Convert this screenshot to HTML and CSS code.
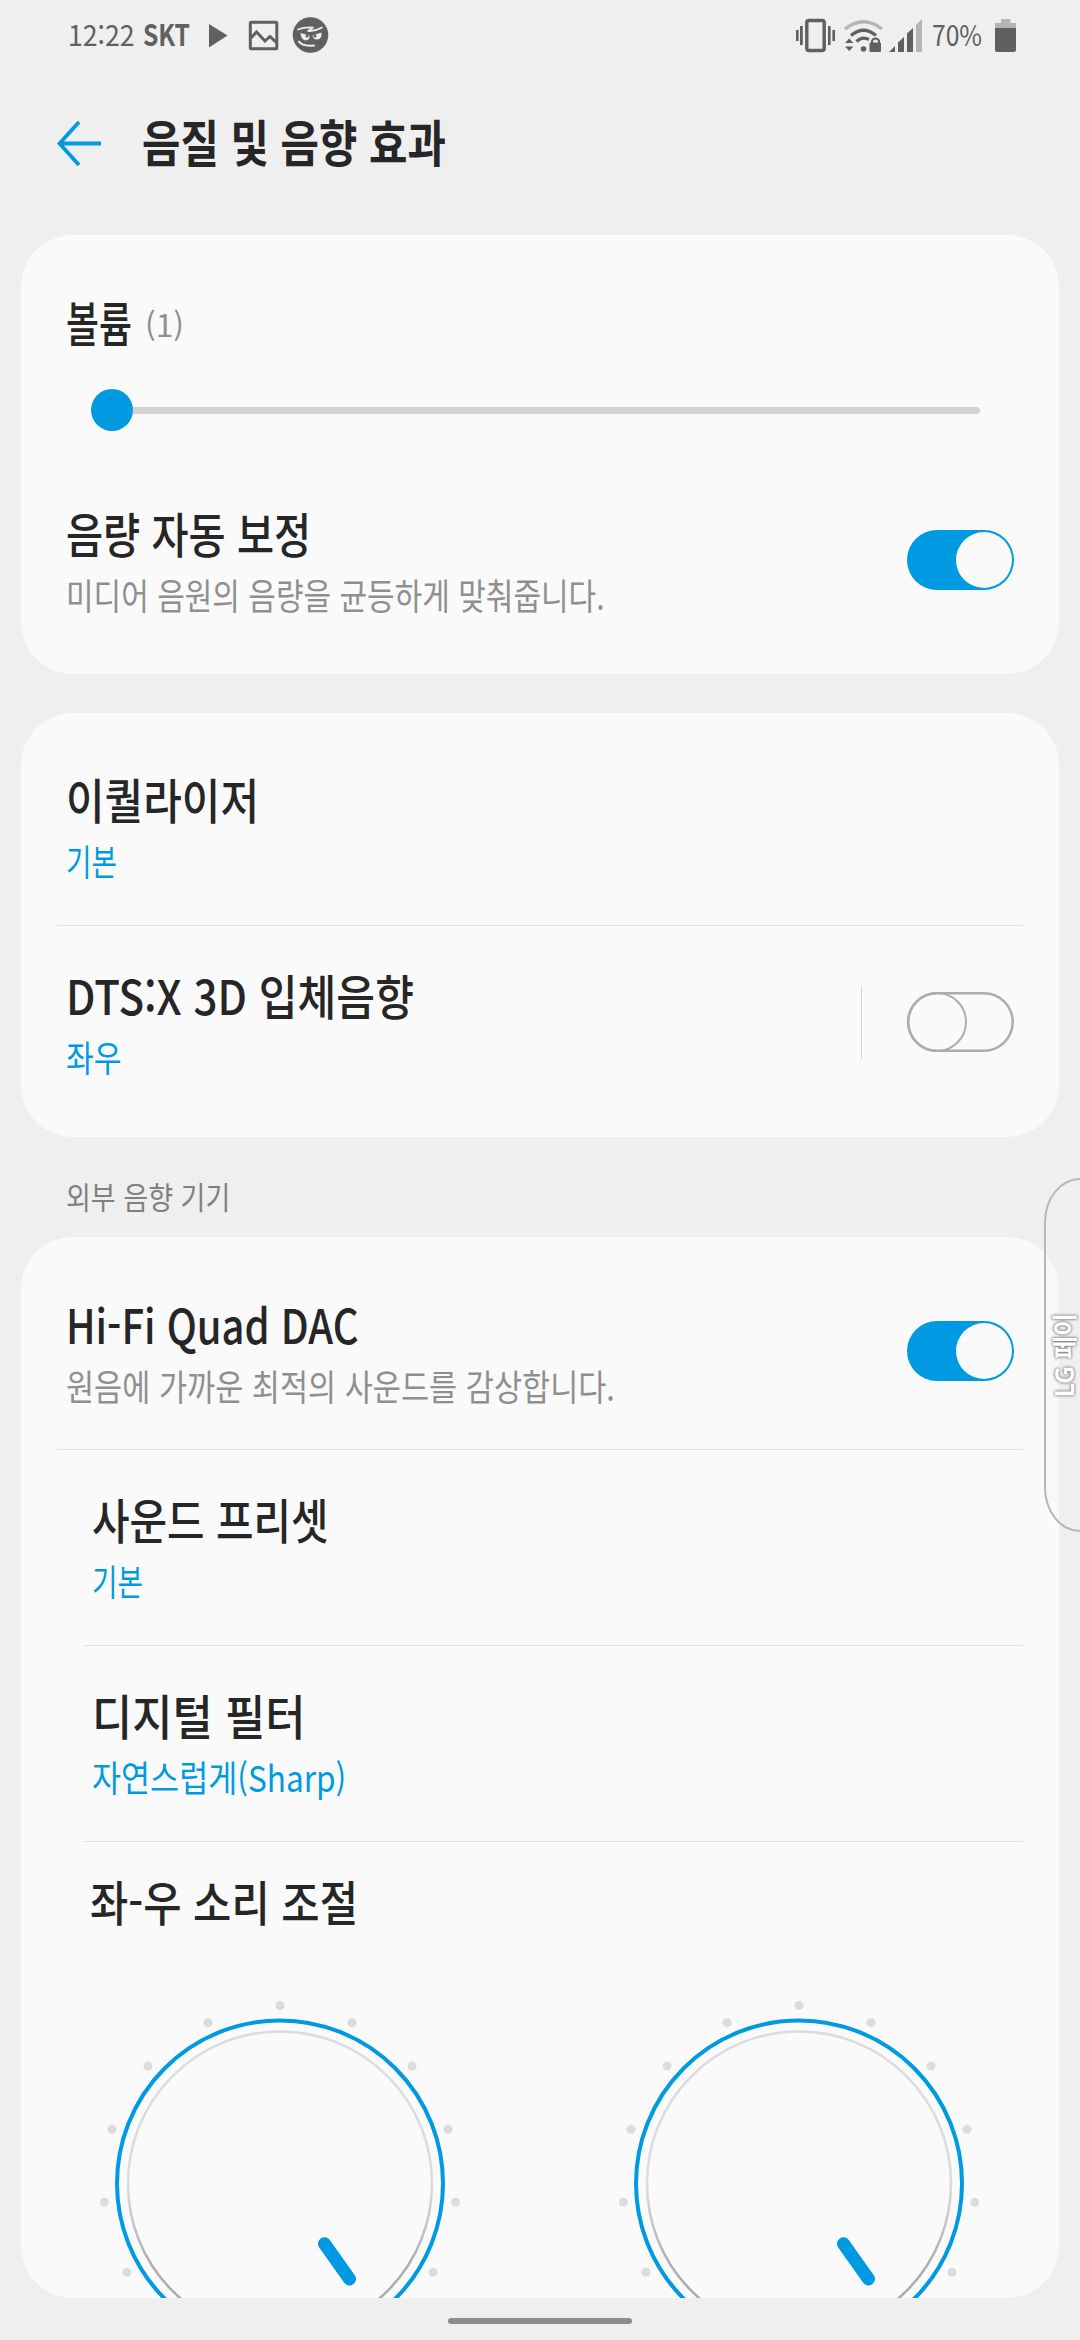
FILE: index.html
```html
<!DOCTYPE html>
<html lang="ko">
<head>
<meta charset="utf-8">
<title>음질 및 음향 효과</title>
<link rel="stylesheet" href="styles.css">
</head>
<body>
<div class="screen">
  <div class="statusbar">
    <div class="status-left">
      <span class="clock"><span class="fit">12:22</span></span>
      <span class="carrier"><span class="fit">SKT</span></span>
      <svg class="status-icons" width="124" height="44" viewBox="205 13 124 44">
        <path d="M209 24 L227.500 35.500 L209 47.500Z" fill="#606060"/>
        <rect x="250.300" y="22.300" width="26.500" height="26.500" rx="1" fill="none" stroke="#606060" stroke-width="3"/>
        <path d="M251 38 L256.500 32 L265 41 L270 36.500 L277 43" fill="none" stroke="#606060" stroke-width="3"/>
        <circle cx="310.500" cy="35" r="17.800" fill="#606060"/>
        <g fill="none" stroke="#efefef" stroke-linecap="round" stroke-linejoin="round">
          <path d="M298 29.500 Q304 27 313 27.500 L308 31 Q315 31.500 322 27.500" stroke-width="1.700"/>
          <path d="M299 41.500 Q302 46.500 314 45.500" stroke-width="2"/>
        </g>
        <path d="M300.500 33 L309.500 35.500 Q310 40 305.500 40.500 Q301 40 300.500 33Z M312.500 35.500 L321.500 32.500 Q322 39.500 317 39.500 Q313 39.500 312.500 35.500Z" fill="#efefef"/>
        <circle cx="307" cy="36" r="1.500" fill="#606060"/><circle cx="315" cy="36" r="1.500" fill="#606060"/>
      </svg>
    </div>
    <div class="status-right">
      <svg width="130" height="44" viewBox="792 13 130 44">
        <g fill="#606060">
          <rect x="796" y="30" width="2.600" height="11"/><rect x="800" y="26" width="2.800" height="19"/>
          <rect x="828" y="26" width="2.600" height="19"/><rect x="832.400" y="30" width="2.600" height="11"/>
        </g>
        <rect x="806.800" y="20.500" width="17.400" height="30" rx="2" fill="none" stroke="#606060" stroke-width="3.400"/>
        <g fill="none">
          <path d="M845 29 Q863.500 14.500 882 29" stroke="#b5b5b5" stroke-width="3.200"/>
          <path d="M851 35.500 Q863.500 25 876 35.500" stroke="#606060" stroke-width="3.200"/>
          <path d="M856.500 41.500 Q862 36 869 39.500" stroke="#606060" stroke-width="3.200"/>
          <path d="M872 43 V41 A3.700 3.700 0 0 1 879 41 V43" stroke="#606060" stroke-width="2"/>
        </g>
        <g fill="#606060">
          <circle cx="863.500" cy="49" r="2.800"/>
          <rect x="869.500" y="42.500" width="11.500" height="9.500" rx="1"/>
          <path d="M845 43 L849.200 38.500 L853.400 43Z M845 46.500 L849.200 51 L853.400 46.500Z"/>
          <path d="M889 52 L895 46 V52Z M898 52 V42.500 L904 37 V52Z M907 52 V33.500 L913 28 V52Z"/>
        </g>
        <path d="M916 52 V25 L922 19 V52Z" fill="#b5b5b5"/>
      </svg>
      <span class="percent"><span class="fit">70%</span></span>
      <svg class="battery" width="22" height="34" viewBox="0 0 22 34">
        <path d="M0 4 H6 V0 H15.500 V4 H21 V10 H0Z" fill="#b5b5b5"/>
        <path d="M0 9 H21 V31 Q21 33 19 33 H2 Q0 33 0 31Z" fill="#606060"/>
      </svg>
    </div>
  </div>

  <header class="header">
    <svg class="back" width="46" height="48" viewBox="0 0 46 48">
      <path d="M22 2 L2.500 23.500 L22 45 M2.500 23.500 H44" fill="none" stroke="#009ae2" stroke-width="3.800"/>
    </svg>
    <h1 class="page-title"><span class="fit">음질 및 음향 효과</span></h1>
  </header>

  <section class="card card-volume">
    <div class="volume-label"><span class="title volume-name"><span class="fit">볼륨</span></span><span class="count"><span class="fit">(1)</span></span></div>
    <div class="slider"><div class="thumb"></div><div class="track"></div></div>
    <div class="row row-auto">
      <div class="texts">
        <div class="title"><span class="fit">음량 자동 보정</span></div>
        <div class="desc"><span class="fit">미디어 음원의 음량을 균등하게 맞춰줍니다.</span></div>
      </div>
      <div class="switch on"><i class="knob"></i></div>
    </div>
  </section>

  <section class="card card-effects">
    <div class="row row-eq">
      <div class="texts">
        <div class="title t-eq"><span class="fit">이퀄라이저</span></div>
        <div class="value v-basic"><span class="fit">기본</span></div>
      </div>
    </div>
    <div class="row row-dts">
      <div class="texts">
        <div class="title t-dts"><span class="fit">DTS:X 3D 입체음향</span></div>
        <div class="value"><span class="fit">좌우</span></div>
      </div>
      <div class="separator"></div>
      <div class="switch off"><i class="knob"></i></div>
    </div>
  </section>

  <h2 class="group"><span class="fit">외부 음향 기기</span></h2>

  <section class="card card-dac">
    <div class="row row-hifi">
      <div class="texts">
        <div class="title t-hifi"><span class="fit">Hi-Fi Quad DAC</span></div>
        <div class="desc d-hifi"><span class="fit">원음에 가까운 최적의 사운드를 감상합니다.</span></div>
      </div>
      <div class="switch on"><i class="knob"></i></div>
    </div>
    <div class="row row-sub">
      <div class="texts">
        <div class="title t-preset"><span class="fit">사운드 프리셋</span></div>
        <div class="value v-basic"><span class="fit">기본</span></div>
      </div>
    </div>
    <div class="row row-sub">
      <div class="texts">
        <div class="title t-filter"><span class="fit">디지털 필터</span></div>
        <div class="value v-sharp"><span class="fit">자연스럽게(Sharp)</span></div>
      </div>
    </div>
    <div class="balance">
      <div class="title t-balance"><span class="fit">좌-우 소리 조절</span></div>
      <div class="dials">
        <svg width="360" height="360" viewBox="-180 -184 360 360">
          <defs><linearGradient id="ring" x1="0" y1="0" x2="0" y2="1"><stop offset="0.500" stop-color="#dcdcdc"/><stop offset="0.750" stop-color="#b0b0b0"/><stop offset="1" stop-color="#a6a6a6"/></linearGradient>
          <g id="dial">
            <g fill="#dcdcdc"><circle cx="0" cy="-178.500" r="4.500"/><circle cx="-72" cy="-161.300" r="4.500"/><circle cx="72" cy="-161.300" r="4.500"/><circle cx="-132" cy="-118" r="4.500"/><circle cx="132" cy="-118" r="4.500"/><circle cx="-168" cy="-54.700" r="4.500"/><circle cx="168" cy="-54.700" r="4.500"/><circle cx="-175.700" cy="18.300" r="4.500"/><circle cx="175.700" cy="18.300" r="4.500"/><circle cx="-153" cy="88.200" r="4.500"/><circle cx="153" cy="88.200" r="4.500"/></g>
            <circle cy="-.500" r="163" fill="none" stroke="#009ae2" stroke-width="4"/>
            <circle cy="-.500" r="152" fill="none" stroke="url(#ring)" stroke-width="2.500"/>
            <path d="M44.500 59.700 L69.500 95" stroke="#009ae2" stroke-width="13" stroke-linecap="round"/>
          </g></defs>
          <use href="#dial"/>
        </svg>
        <svg width="360" height="360" viewBox="-180 -184 360 360"><use href="#dial"/></svg>
      </div>
    </div>
  </section>

  <div class="navbar"><div class="pill"></div></div>
  <div class="pay-tab"><span class="pay-label">LG 페이</span></div>
</div>
</body>
</html>
```

FILE: styles.css
```css
* { box-sizing: border-box; }
html, body { margin: 0; }
body { background: #efefef; font-family: "Noto Sans CJK KR", "Noto Sans", sans-serif; color: #262626; }
.screen { position: relative; display: flex; flex-direction: column; width: 1080px; height: 2340px; overflow: hidden; background: #efefef; }

/* Condensed text: each line sets its own horizontal factor */
.fit { display: inline-block; white-space: nowrap; transform: scaleX(var(--fit, .84)); transform-origin: left center; }

.statusbar { display: flex; justify-content: space-between; height: 70px; padding: 0 63px 0 68px; color: #606060; font-size: 29px; line-height: 67px; }
.status-left, .status-right { display: flex; align-items: center; height: 70px; }
.clock, .carrier, .percent { height: 70px; }
.clock { width: 75px; --fit: .92; }
.carrier { width: 62px; font-weight: 700; font-size: 30px; --fit: .82; }
.percent { width: 53px; margin-left: 10px; --fit: .85; }
.battery { margin: 2px 0 0 10px; }

.header { display: flex; align-items: center; height: 165px; padding: 0 57px 18px; gap: 39px; }
.page-title { margin: 0; padding-bottom: 8px; font-size: 50px; line-height: 60px; font-weight: 700; --fit: .835; }

.card { display: flex; flex-direction: column; flex: none; width: 1038px; margin-left: 21px; border-radius: 52px; background: #fafafa; overflow: hidden; }
.card-volume { height: 439px; padding-top: 55px; }
.card-effects { height: 424px; margin-top: 39px; }
.card-dac { height: 1061px; }

.volume-label { display: flex; align-items: center; height: 66px; padding-left: 45px; }
.volume-name { width: 79px; padding-bottom: 4px; --fit: .745; }
.count { color: #8f8f8f; font-size: 31px; --fit: 1.02; }
.slider { display: flex; align-items: center; height: 42px; margin: 33px 79px 0 70px; }
.thumb { width: 42px; height: 42px; border-radius: 50%; background: #009ae2; }
.track { flex: 1; height: 7px; border-radius: 0 4px 4px 0; background: #d3d3d3; }

.title { font-size: 48px; line-height: 60px; font-weight: 500; color: #262626; }
.desc, .value { margin-top: 5px; font-size: 36px; line-height: 54px; color: #8f8f8f; }
.desc { --fit: .833; }
.value { color: #009ae2; }
.v-basic { --fit: .77; }
.v-sharp { --fit: .877; }
.d-hifi { --fit: .849; }
.t-eq { --fit: .874; }
.t-dts { --fit: .878; }
.t-hifi { --fit: .832; }
.t-preset { --fit: .85; }
.t-filter { --fit: .911; }
.row { position: relative; display: flex; align-items: center; flex: none; padding: 0 45px; }
.texts { flex: 1; }
.row-auto { height: 117px; margin-top: 70px; }
.row-auto .texts { padding-top: 3px; }
.row-eq { height: 213px; padding-top: 16px; }
.row-dts { height: 211px; padding-bottom: 19px; }
.row-dts .texts { padding-top: 3px; }
.row-hifi { height: 213px; padding-top: 14px; }
.row-hifi .texts { padding-top: 3px; }
.row-sub { height: 196px; padding-left: 71px; padding-bottom: 1px; }
.row-dts::before, .row-sub::before, .balance::before { content: ""; position: absolute; top: -1px; left: 63px; right: 36px; height: 1px; background: #e2e2e2; }
.row-dts::before, .row-hifi + .row-sub::before { left: 36px; }
.separator { width: 1px; height: 73px; margin-right: 45px; background: #d6d6d6; }

.switch { display: flex; width: 107px; height: 60px; border-radius: 30px; }
.knob { display: block; border-radius: 50%; }
.on { justify-content: flex-end; align-items: center; padding-right: 2px; background: #009ae2; }
.on .knob { width: 56px; height: 56px; background: #fafafa; }
.off { box-shadow: inset 0 0 0 2.500px #adadad; }
.off .knob { width: 60px; height: 60px; border: 2.500px solid #adadad; }

.group { margin: 0 0 0 66px; height: 100px; padding-top: 34px; font-size: 31px; line-height: 50px; font-weight: 400; color: #808080; --fit: .872; }
.balance { position: relative; flex: 1; }
.t-balance { padding: 28px 0 0 69px; --fit: .867; }
.dials { display: flex; gap: 159px; margin: 70px 0 0 79px; }
.dials svg { flex: none; }

.navbar { display: flex; justify-content: center; height: 42px; padding-top: 20px; }
.pill { width: 184px; height: 6px; border-radius: 3px; background: #8c8c8c; }

/* Edge tab floating over the list */
.pay-tab { position: absolute; top: 1178px; right: 0; width: 36px; height: 354px; display: flex; align-items: center; justify-content: center; border: 2px solid #b8b8b8; border-right: 0; border-radius: 36px 0 0 36px / 44px 0 0 44px; background: rgba(244,244,244,.35); }
.pay-label { writing-mode: vertical-rl; text-orientation: sideways; transform: rotate(180deg); font-size: 25px; line-height: 30px; font-weight: 700; color: #fff; white-space: nowrap; text-shadow: 0 0 3px #777, 0 0 3px #888; }
```
